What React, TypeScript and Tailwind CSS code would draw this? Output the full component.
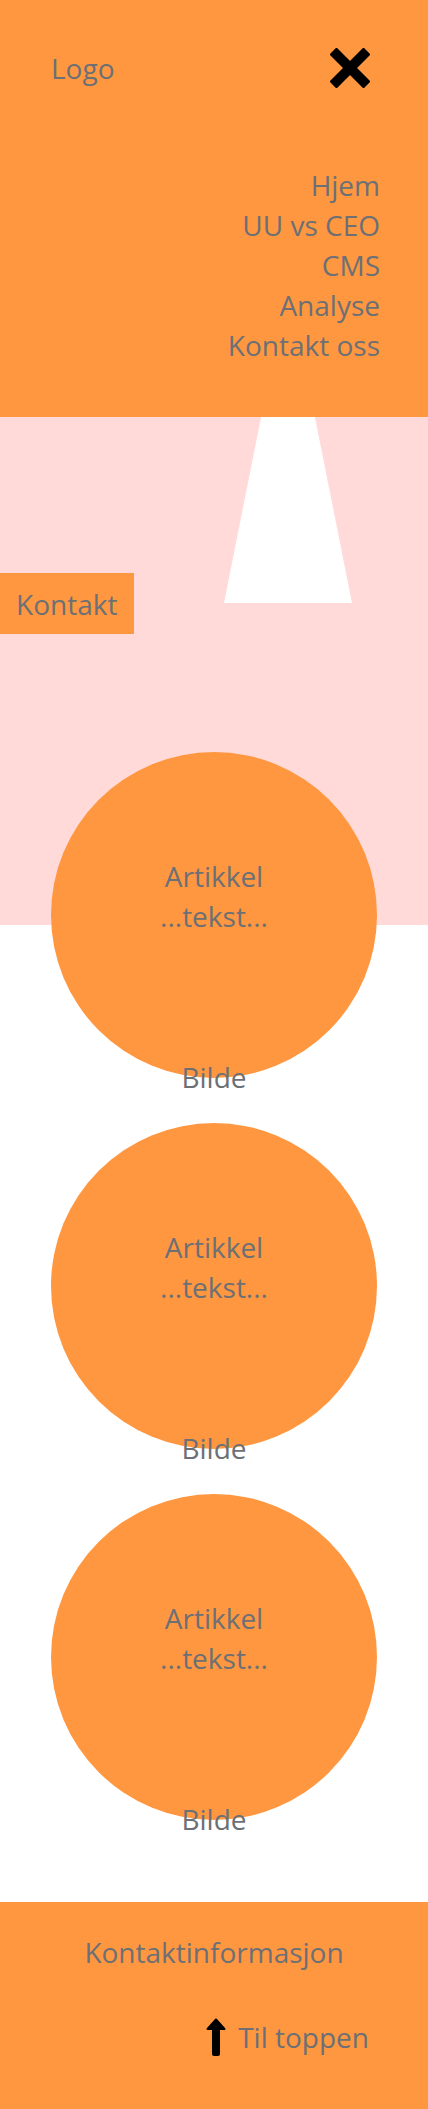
const navLinks = ['Hjem', 'UU vs CEO', 'CMS', 'Analyse', 'Kontakt oss'];

const CloseIcon = () => (
  <svg width="40" height="40" viewBox="0 0 40 40" aria-hidden="true">
    <path d="M6.5 6.5 L33.5 33.5 M33.5 6.5 L6.5 33.5" stroke="#000" strokeWidth="10" strokeLinecap="square" />
  </svg>
);

const ArrowUp = () => (
  <svg width="20" height="38" viewBox="0 0 20 38" aria-hidden="true">
    <path d="M10 1.5 L18.5 11 L1.5 11 Z" fill="#000" stroke="#000" strokeWidth="2" strokeLinejoin="round" />
    <rect x="6" y="9" width="8" height="29" rx="2" fill="#000" />
  </svg>
);

const Article = () => (
  <article className="mx-auto flex h-[326px] w-[326px] flex-col items-center rounded-full bg-[#ff9741] pt-[104px] text-center">
    <p>Artikkel</p>
    <p>...tekst...</p>
    <p className="mt-[121px]">Bilde</p>
  </article>
);

export default function App() {
  return (
    <div className="bg-white text-[#6c7075] text-[28px] leading-[40px] font-['Open_Sans','Noto_Sans',sans-serif]">
      {/* Header with open menu */}
      <header className="bg-[#ff9741] px-12 pt-12 pb-[52px]">
        <div className="flex h-10 items-center justify-between">
          <span className="pl-[3px]">Logo</span>
          <button className="mr-[10px] flex items-center" aria-label="Lukk meny">
            <CloseIcon />
          </button>
        </div>
        <nav className="mt-[77px] flex flex-col items-end">
          {navLinks.map((link) => (
            <a key={link} href="#">
              {link}
            </a>
          ))}
        </nav>
      </header>

      {/* Hero */}
      <section className="relative h-[508px] bg-[#ffdad9] pt-[156px]">
        <div className="absolute left-[224px] top-0 h-[186px] w-[128px] bg-white [clip-path:polygon(29%_0,71%_0,100%_100%,0_100%)]" />
        <a href="#" className="relative inline-block bg-[#ff9741] pl-4 pr-[17px] pt-[11px] pb-[10px]">
          Kontakt
        </a>
      </section>

      {/* Articles */}
      <main className="relative -mt-[173px] flex flex-col gap-[45px]">
        <Article />
        <Article />
        <Article />
      </main>

      {/* Footer */}
      <footer className="mt-[82px] bg-[#ff9741] pt-[30px] pb-[52px]">
        <p className="text-center">Kontaktinformasjon</p>
        <a href="#" className="mt-[45px] flex items-center justify-end gap-3 pr-[59px]">
          <ArrowUp />
          <span>Til toppen</span>
        </a>
      </footer>
    </div>
  );
}
